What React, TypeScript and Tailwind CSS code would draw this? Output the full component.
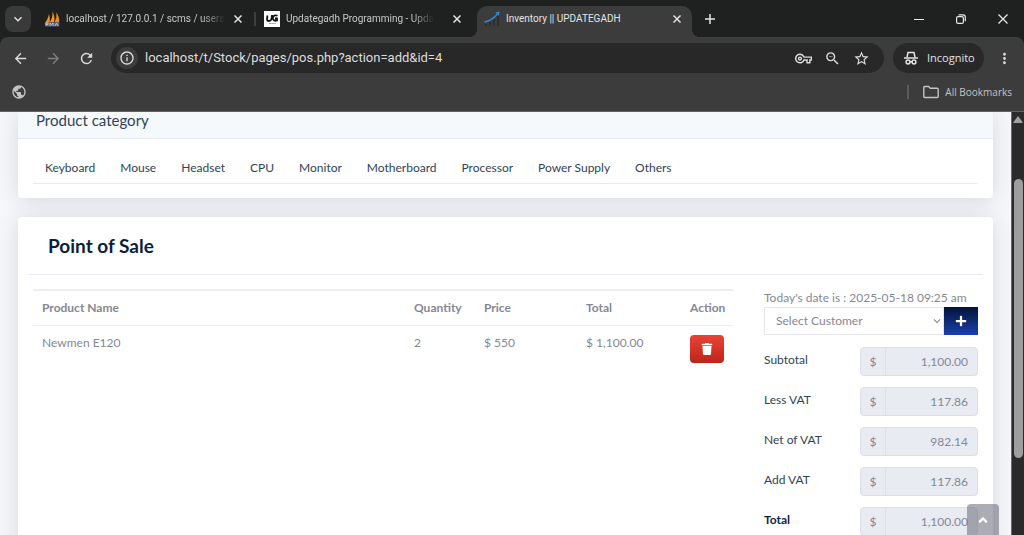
import React, { useState } from 'react';
import {
  MdArrowBack,
  MdArrowForward,
  MdInfoOutline,
  MdKeyboardArrowDown,
  MdMoreVert,
  MdOutlineVpnKey,
  MdOutlineZoomOut,
  MdPublic,
  MdRefresh,
  MdStarBorder,
} from 'react-icons/md';
import { FaAngleUp, FaPlus, FaTrash } from 'react-icons/fa';

type Item = {
  name: string;
  quantity: number;
  price: string;
  total: string;
};

type Amount = {
  id: string;
  label: string;
  value: string;
  bold?: boolean;
};

const categories = [
  'Keyboard', 'Mouse', 'Headset', 'CPU', 'Monitor',
  'Motherboard', 'Processor', 'Power Supply', 'Others',
];

const items: Item[] = [
  { name: 'Newmen E120', quantity: 2, price: '$ 550', total: '$ 1,100.00' },
];

const amounts: Amount[] = [
  { id: 'subtotal', label: 'Subtotal', value: '1,100.00' },
  { id: 'lessvat', label: 'Less VAT', value: '117.86' },
  { id: 'netvat', label: 'Net of VAT', value: '982.14' },
  { id: 'addvat', label: 'Add VAT', value: '117.86' },
  { id: 'total', label: 'Total', value: '1,100.00', bold: true },
];

const PmaIcon = () => (
  <svg viewBox="0 0 16 16" className="h-4 w-4 shrink-0">
    <path d="M1 12 Q4 8 5 3 Q6.500 8 5.500 12Z" fill="#e8912a" />
    <path d="M5.500 11.500 Q9 7 8.500 0.500 Q11.500 7 10 11.500Z" fill="#f59b23" />
    <path d="M10.500 11.500 Q13 7 12.500 1.500 Q16 7 15 11.500Z" fill="#ef8a1c" />
    <path d="M0.500 12 L15.500 11 L15 15.500 L1.500 15.500Z" fill="#5d6184" />
    <path d="M2 15v-3h2v1.500H2M6 15v-3l1.500 1.500L9 12v3M11 15l1.500-3 1.500 3" fill="none" stroke="#c3c5d6" strokeWidth="0.900" />
  </svg>
);

const ChartIcon = () => (
  <svg viewBox="0 0 16 16" className="h-4 w-4 shrink-0">
    <path d="M1 13h2v2H1zM5 11h2v4H5zM9 8h2v7H9zM13 5h2v10h-2z" fill="#2f3031" />
    <path d="M0.500 11 Q8 9.500 13.500 3" fill="none" stroke="#2b8fd6" strokeWidth="1.300" />
    <path d="M11.500 1.500 L15.500 0.500 L14.800 4.500Z" fill="#2b8fd6" />
  </svg>
);

const IncognitoIcon = () => (
  <svg viewBox="0 0 16 16" className="h-4 w-4 shrink-0" fill="none" stroke="#e3e3e3" strokeWidth="1.500">
    <path d="M4 7.500 L5 2.500 H11 L12 7.500" />
    <path d="M1 8 H15" />
    <circle cx="5" cy="12" r="1.900" />
    <circle cx="11" cy="12" r="1.900" />
    <path d="M7 11.700 H9" />
  </svg>
);

const FolderIcon = () => (
  <svg viewBox="0 0 16 14" className="h-3.5 w-4 shrink-0" fill="none" stroke="currentColor" strokeWidth="1.400">
    <path d="M0.800 2.500 Q0.800 1.500 1.800 1.500 H5.600 L7.300 3.200 H14.200 Q15.200 3.200 15.200 4.200 V11.500 Q15.200 12.500 14.200 12.500 H1.800 Q0.800 12.500 0.800 11.500Z" />
  </svg>
);

const RestoreIcon = () => (
  <svg viewBox="0 0 10 10" className="h-2.5 w-2.5" fill="none" stroke="#e8e8e8" strokeWidth="1.200">
    <rect x="0.600" y="2.600" width="6.800" height="6.800" rx="1.500" />
    <path d="M2.600 0.800 H7 Q9.300 0.800 9.300 3 V7.300" />
  </svg>
);

const TabTitle = ({ children, fade }: { children: React.ReactNode; fade?: boolean }) => (
  <span
    className={
      fade
        ? 'whitespace-nowrap font-[Roboto,sans-serif] text-[10px] leading-4 [mask-image:linear-gradient(to_right,black_85%,transparent)]'
        : 'whitespace-nowrap font-[Roboto,sans-serif] text-[10px] leading-4'
    }
  >
    {children}
  </span>
);

const CloseTab = () => (
  <button type="button" aria-label="Close tab" className="ml-auto shrink-0 text-[#e3e3e3]">
    <svg viewBox="0 0 8 8" className="h-2 w-2" stroke="currentColor" strokeWidth="1.500">
      <path d="M0.500 0.500l7 7M7.500 0.500l-7 7" />
    </svg>
  </button>
);

const TabStrip = () => (
  <div className="flex h-[37px] shrink-0 items-start bg-[#1f2120] pt-1.5 text-[#c7c7c7]">
    <button
      type="button"
      aria-label="Search tabs"
      className="ml-[5px] flex h-[26px] w-[26px] shrink-0 items-center justify-center rounded-lg bg-[#3a3a3a] text-[#e3e3e3]"
    >
      <MdKeyboardArrowDown size={16} />
    </button>
    <div className="ml-[13px] flex h-[26px] w-[212px] items-center gap-1.5">
      <PmaIcon />
      <TabTitle fade>localhost / 127.0.0.1 / scms / users</TabTitle>
      <CloseTab />
      <span className="ml-1.5 h-3.5 w-0.5 bg-[#3f3f3f]" />
    </div>
    <div className="flex h-[26px] w-[221px] items-center gap-1.5 pl-2 pr-4">
      <svg viewBox="0 0 16 16" className="h-4 w-4 shrink-0">
        <rect width="16" height="16" fill="#fff" />
        <path d="M3.500 4.500L3 8q0 2 2 2T7.500 8L8 4M13.500 4.800Q12 4 10.500 4.500 8.500 5.500 9 8q.8 2.500 4 1.500V7.500h-2" fill="none" stroke="#111" strokeWidth="1.800" />
        <path d="M5 12.500h7" stroke="#999" strokeWidth="0.800" />
      </svg>
      <TabTitle fade>Updategadh Programming - Upda</TabTitle>
      <CloseTab />
    </div>
    <div className="relative flex h-[31px] w-[215px] items-center gap-1.5 rounded-t-[10px] bg-[#3c3c3c] pb-[5px] pl-[7px] pr-[11px] text-[#e3e3e3]">
      <span className="absolute -left-2 bottom-0 h-2 w-2 bg-[radial-gradient(circle_at_0_0,transparent_8px,#3c3c3c_8px)]" />
      <span className="absolute -right-2 bottom-0 h-2 w-2 bg-[radial-gradient(circle_at_100%_0,transparent_8px,#3c3c3c_8px)]" />
      <ChartIcon />
      <TabTitle>Inventory || UPDATEGADH</TabTitle>
      <CloseTab />
    </div>
    <button type="button" aria-label="New tab" className="ml-3 flex h-[26px] w-3 items-center text-[#e3e3e3]">
      <svg viewBox="0 0 12 12" className="h-3 w-3" stroke="currentColor" strokeWidth="1.500">
        <path d="M6 1v10M1 6h10" />
      </svg>
    </button>
    <div className="ml-auto flex h-[26px] items-center gap-8 pr-4 text-[#e8e8e8]">
      <button type="button" aria-label="Minimize" className="h-px w-2.5 bg-[#e8e8e8]" />
      <button type="button" aria-label="Restore">
        <RestoreIcon />
      </button>
      <button type="button" aria-label="Close">
        <svg viewBox="0 0 10 10" className="h-2.5 w-2.5" stroke="currentColor" strokeWidth="1.300">
          <path d="M0.500 0.500l9 9M9.500 0.500l-9 9" />
        </svg>
      </button>
    </div>
  </div>
);

const Toolbar = () => (
  <div className="shrink-0 bg-[#1f2120]">
    <div className="rounded-t-lg border-b border-[#636363] bg-[#3c3c3c] pt-1.5">
      <div className="flex h-[30px] items-center text-[#dcdcdc]">
        <button type="button" aria-label="Back" className="ml-3">
          <MdArrowBack size={17} />
        </button>
        <button type="button" aria-label="Forward" className="ml-4 text-[#7d7d7d]">
          <MdArrowForward size={17} />
        </button>
        <button type="button" aria-label="Reload" className="ml-4">
          <MdRefresh size={17} />
        </button>
        <div className="ml-4 flex h-[30px] min-w-0 flex-1 items-center rounded-full bg-[#282828] pl-[5px] pr-3.5">
          <span className="flex h-[22px] w-[22px] shrink-0 items-center justify-center rounded-full bg-[#3c3c3c]">
            <MdInfoOutline size={16} />
          </span>
          <input
            type="text"
            aria-label="Address"
            defaultValue="localhost/t/Stock/pages/pos.php?action=add&id=4"
            className="ml-[7px] min-w-0 flex-1 bg-transparent font-[Roboto,sans-serif] text-[13px] text-[#dcdcdc] outline-none"
          />
          <div className="flex items-center gap-3">
            <MdOutlineVpnKey size={17} />
            <MdOutlineZoomOut size={17} />
            <MdStarBorder size={17} />
          </div>
        </div>
        <button
          type="button"
          className="ml-[9px] flex h-[30px] w-[91px] shrink-0 items-center gap-2 rounded-full bg-[#282828] pl-2.5 text-[11px] text-[#e3e3e3]"
        >
          <IncognitoIcon />
          Incognito
        </button>
        <button type="button" aria-label="Menu" className="ml-3 mr-[11px]">
          <MdMoreVert size={17} />
        </button>
      </div>
      <div className="flex h-[38px] items-center pl-[11px] pr-3 text-[#c4c4c4]">
        <MdPublic size={16} />
        <div className="ml-auto flex items-center">
          <span className="h-3.5 w-0.5 bg-[#5a5a5a]" />
          <span className="ml-3.5">
            <FolderIcon />
          </span>
          <button type="button" className="ml-1.5 text-[10px] leading-4">All Bookmarks</button>
        </div>
      </div>
    </div>
  </div>
);

const ScrollBar = () => (
  <div className="flex w-[13px] shrink-0 flex-col items-center border-l border-[#6b6b6b] bg-[#2a2a2a] pt-1">
    <svg viewBox="0 0 10 7" className="h-[7px] w-[10px]" fill="#a0a0a0">
      <path d="M5 0l4.500 6a.6.6 0 0 1-.5 1H1a.6.6 0 0 1-.5-1z" />
    </svg>
    <div className="mt-14 h-2/3 w-[9px] rounded-full bg-[#9d9d9d]" />
  </div>
);

const AmountRow = ({ amount }: { amount: Amount }) => (
  <div className="flex justify-between">
    <label
      htmlFor={amount.id}
      className={amount.bold ? 'pt-1 font-bold text-[#12263f]' : 'pt-1 text-[#2f4358]'}
    >
      {amount.label}
    </label>
    <div className="flex h-[29px] w-[118px] overflow-hidden rounded border border-[#dcdfea] bg-[#e9ebf2] text-[#858796]">
      <span className="flex w-[25px] shrink-0 items-center justify-center border-r border-[#dcdfea]">$</span>
      <input
        id={amount.id}
        type="text"
        readOnly
        value={amount.value}
        className="min-w-0 flex-1 bg-transparent pr-[9px] text-right outline-none"
      />
    </div>
  </div>
);

export default function App() {
  const [customer, setCustomer] = useState<string>('');

  return (
    <div className="flex h-screen flex-col overflow-hidden font-['Open_Sans','Noto_Sans',sans-serif]">
      <TabStrip />
      <Toolbar />
      <div className="flex min-h-0 flex-1">
        <main className="relative min-w-0 flex-1 overflow-hidden bg-[#f6f7fb] px-[18px] font-['Lato','Open_Sans',sans-serif] text-xs leading-[18px] text-[#858796]">
          <section className="rounded-b bg-white shadow-[0_2px_21px_rgba(33,40,50,0.15)]">
            <h2 className="border-b border-[#e8ebf4] bg-[#f6f9fc] px-[18px] pb-2.5 text-[15px] leading-4 text-[#2f4358]">
              Product category
            </h2>
            <div className="px-[15px] pb-3.5 pt-4">
              <nav className="flex gap-[25px] border-b border-[#e8ebf1] px-3 pb-1.5 pt-1 text-[#2f4358]">
                {categories.map((category) => (
                  <a key={category} href="#">{category}</a>
                ))}
              </nav>
            </div>
          </section>

          <section className="mt-[19px] rounded bg-white px-2.5 pb-10 shadow-[0_2px_21px_rgba(33,40,50,0.15)]">
            <h1 className="border-b border-[#e8ebf1] px-5 py-4 text-[19px] leading-[25px] font-bold text-[#0b1f3a]">
              Point of Sale
            </h1>
            <div className="flex items-start gap-[31px] px-[5px] pt-3.5">
              <table className="flex-1 table-fixed text-left">
                <colgroup>
                  <col />
                  <col className="w-[70px]" />
                  <col className="w-[102px]" />
                  <col className="w-[104px]" />
                  <col className="w-[52px]" />
                </colgroup>
                <thead className="border-b border-t-2 border-[#eceef4]">
                  <tr>
                    <th className="py-2 pl-[9px]">Product Name</th>
                    <th className="py-2 pl-[9px]">Quantity</th>
                    <th className="py-2 pl-[9px]">Price</th>
                    <th className="py-2 pl-[9px]">Total</th>
                    <th className="py-2 pl-[9px]">Action</th>
                  </tr>
                </thead>
                <tbody className="align-top">
                  {items.map((item) => (
                    <tr key={item.name}>
                      <td className="py-2 pl-[9px]">{item.name}</td>
                      <td className="py-2 pl-[9px]">{item.quantity}</td>
                      <td className="py-2 pl-[9px]">{item.price}</td>
                      <td className="py-2 pl-[9px]">{item.total}</td>
                      <td className="py-[9px] pl-[9px]">
                        <button
                          type="button"
                          aria-label="Remove item"
                          className="flex h-7 w-[34px] items-center justify-center rounded bg-linear-to-b from-[#ea4335] to-[#bd2418] text-white"
                        >
                          <FaTrash size={12} />
                        </button>
                      </td>
                    </tr>
                  ))}
                </tbody>
              </table>

              <form className="w-[214px] shrink-0">
                <p className="whitespace-nowrap">Today's date is : 2025-05-18 09:25 am</p>
                <div className="flex h-7">
                  <div className="relative flex-1">
                    <select
                      aria-label="Customer"
                      value={customer}
                      onChange={(e) => setCustomer(e.target.value)}
                      className="h-full w-full appearance-none border border-[#e3e6f0] bg-white pl-[11px] outline-none"
                    >
                      <option value="">Select Customer</option>
                    </select>
                    <MdKeyboardArrowDown size={14} className="pointer-events-none absolute right-0 top-[7px]" />
                  </div>
                  <button
                    type="button"
                    aria-label="Add customer"
                    className="flex w-[34px] items-center justify-center bg-linear-to-b from-[#04143a] to-[#1c40b0] text-white"
                  >
                    <FaPlus size={12} />
                  </button>
                </div>
                <div className="mt-3 flex flex-col gap-[11px]">
                  {amounts.map((amount) => (
                    <AmountRow key={amount.id} amount={amount} />
                  ))}
                </div>
              </form>
            </div>
          </section>

          <a
            href="#"
            aria-label="Scroll to top"
            className="absolute bottom-0 right-3 flex h-[31px] w-8 items-center justify-center rounded-t bg-[#5a5c69]/50 text-white"
          >
            <FaAngleUp size={14} />
          </a>
        </main>
        <ScrollBar />
      </div>
    </div>
  );
}
